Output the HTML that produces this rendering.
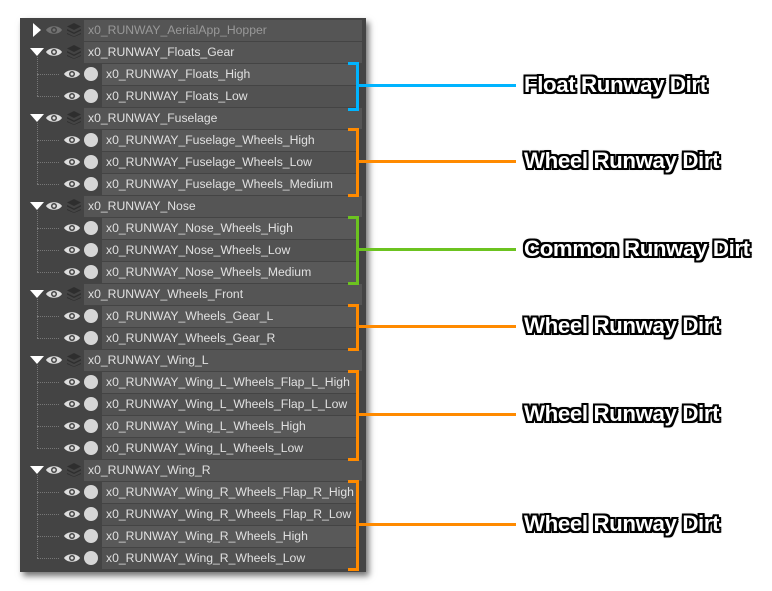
<!DOCTYPE html><html><head><style>
body{margin:0;width:772px;height:591px;background:#fff;position:relative;overflow:hidden;font-family:"Liberation Sans",sans-serif}
.panel{position:absolute;left:20px;top:18px;width:346px;height:554px;background:#444;box-shadow:3px 4px 6px rgba(0,0,0,.55)}
.r{position:absolute;height:21px;color:#e0e0e0;font-size:12.2px;line-height:21px;padding-left:4px;box-sizing:border-box;white-space:nowrap}
.g{left:64px;width:278px;background:#555}
.c{left:82px;width:254px}
.c.a{background:#595959}.c.b{background:#525252}
.eye{position:absolute;width:16px;height:10px}
.dot{position:absolute;width:14px;height:14px;border-radius:50%;background:#d6d6d6}
.tri{position:absolute;width:0;height:0}
.lay{position:absolute;width:14px;height:14px}
.vl{position:absolute;border-left:1px dotted #777}
.hl{position:absolute;border-top:1px dotted #777;width:22px}
.br{position:absolute;border:3px solid;border-left:none;width:8px}
.ln{position:absolute;height:3px}
.lbl{position:absolute;left:524px;color:#fff;font-weight:bold;font-size:22.3px;letter-spacing:-0.4px;white-space:nowrap;text-shadow:-2px 0 #000,2px 0 #000,0 -2px #000,0 2px #000,-2px -2px #000,2px 2px #000,-2px 2px #000,2px -2px #000,0 0 3px #000}
</style></head><body>
<div class="panel">
<div id="rows"></div>
</div>
<svg width="0" height="0" style="position:absolute"><defs>
<symbol id="e" viewBox="0 0 16 10"><path d="M0 5C3 0 13 0 16 5C13 10 3 10 0 5Z" fill="#ddd"/><circle cx="8" cy="5" r="3" fill="#444"/><circle cx="8" cy="5" r="1.5" fill="#ddd"/></symbol>
<symbol id="l" viewBox="0 0 14 14"><path d="M7 0L14 3.5L7 7L0 3.5Z M0 6L7 9.5L14 6L14 7.5L7 11L0 7.5Z M0 10L7 13.5L14 10L14 11L7 14L0 11Z" fill="#2e2e2e"/></symbol>
</defs></svg>
<script>
var d=[["g","x0_RUNWAY_AerialApp_Hopper",1],["g","x0_RUNWAY_Floats_Gear"],["c","x0_RUNWAY_Floats_High"],["c","x0_RUNWAY_Floats_Low"],["g","x0_RUNWAY_Fuselage"],["c","x0_RUNWAY_Fuselage_Wheels_High"],["c","x0_RUNWAY_Fuselage_Wheels_Low"],["c","x0_RUNWAY_Fuselage_Wheels_Medium"],["g","x0_RUNWAY_Nose"],["c","x0_RUNWAY_Nose_Wheels_High"],["c","x0_RUNWAY_Nose_Wheels_Low"],["c","x0_RUNWAY_Nose_Wheels_Medium"],["g","x0_RUNWAY_Wheels_Front"],["c","x0_RUNWAY_Wheels_Gear_L"],["c","x0_RUNWAY_Wheels_Gear_R"],["g","x0_RUNWAY_Wing_L"],["c","x0_RUNWAY_Wing_L_Wheels_Flap_L_High"],["c","x0_RUNWAY_Wing_L_Wheels_Flap_L_Low"],["c","x0_RUNWAY_Wing_L_Wheels_High"],["c","x0_RUNWAY_Wing_L_Wheels_Low"],["g","x0_RUNWAY_Wing_R"],["c","x0_RUNWAY_Wing_R_Wheels_Flap_R_High"],["c","x0_RUNWAY_Wing_R_Wheels_Flap_R_Low"],["c","x0_RUNWAY_Wing_R_Wheels_High"],["c","x0_RUNWAY_Wing_R_Wheels_Low"]];
var h="",k=0,gs=0;
d.forEach(function(r,i){var t=2+22*i,m=t+10;
if(r[0]=="g"){k=0;
 if(r[2]){h+='<div class="tri" style="left:13px;top:'+(m-7)+'px;border-left:8px solid #fff;border-top:7px solid transparent;border-bottom:7px solid transparent"></div>';
 h+='<svg class="eye" style="left:26px;top:'+(m-5)+'px;opacity:.3"><use href="#e"/></svg>';
 h+='<div class="r g" style="top:'+t+'px;color:#999">'+r[1]+'</div>';}
 else{h+='<div class="tri" style="left:10px;top:'+(m-4)+'px;border-top:8px solid #fff;border-left:7px solid transparent;border-right:7px solid transparent"></div>';
 h+='<svg class="eye" style="left:26px;top:'+(m-5)+'px"><use href="#e"/></svg>';
 h+='<div class="r g" style="top:'+t+'px">'+r[1]+'</div>';gs=m+5;}
 h+='<svg class="lay" style="left:47px;top:'+(m-7)+'px"><use href="#l"/></svg>';
}else{
 h+='<div class="vl" style="left:17px;top:'+gs+'px;height:'+(m-gs)+'px"></div>';
 h+='<div class="hl" style="left:17px;top:'+m+'px"></div>';
 h+='<svg class="eye" style="left:44px;top:'+(m-5)+'px"><use href="#e"/></svg>';
 h+='<div class="dot" style="left:64px;top:'+(m-7)+'px"></div>';
 h+='<div class="r c '+(k%2?'b':'a')+'" style="top:'+t+'px">'+r[1]+'</div>';k++;}
});
document.getElementById("rows").innerHTML=h;
var b=[[62,108,"#00b4ff","Float Runway Dirt"],[128,194,"#ff8a00","Wheel Runway Dirt"],[216,282,"#6cc320","Common Runway Dirt"],[304,348,"#ff8a00","Wheel Runway Dirt"],[370,458,"#ff8a00","Wheel Runway Dirt"],[480,568,"#ff8a00","Wheel Runway Dirt"]];
var s="";b.forEach(function(x){var m=Math.round((x[0]+x[1])/2);
s+='<div class="br" style="left:348px;top:'+x[0]+'px;height:'+(x[1]-x[0]-3)+'px;border-color:'+x[2]+'"></div>';
s+='<div class="ln" style="left:358px;width:158px;top:'+(m-1)+'px;background:'+x[2]+'"></div>';
s+='<div class="lbl" style="top:'+(m-13)+'px">'+x[3]+'</div>';});
document.body.insertAdjacentHTML("beforeend",s);
</script>
</body></html>
